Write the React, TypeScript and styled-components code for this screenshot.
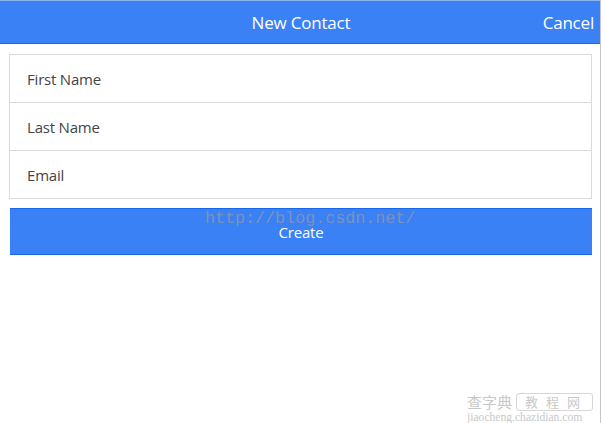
import React from "react";
import styled, { createGlobalStyle } from "styled-components";

const Global = createGlobalStyle`
  html, body { margin: 0; padding: 0; background: #fff; }
  body { font-family: "Open Sans", "Noto Sans", sans-serif; }
`;

const Frame = styled.div`
  position: relative;
  width: 601px;
  height: 423px;
  border-right: 1px solid #c4c4c4;
  box-sizing: border-box;
  overflow: hidden;
`;

const Header = styled.header`
  width: 600px;
  height: 44px;
  box-sizing: border-box;
  background: #3a81f6;
  border-top: 1px solid #8db3f2;
  border-bottom: 1px solid #1767e8;
  display: grid;
  grid-template-columns: 1fr auto 1fr;
  align-items: center;
  color: #fff;
  font-size: 17px;
`;

const Title = styled.div`
  grid-column: 2;
  letter-spacing: -0.2px;
  padding-left: 2px;
`;

const Cancel = styled.div`
  grid-column: 3;
  justify-self: end;
  padding-right: 6px;
  letter-spacing: -0.2px;
`;

const List = styled.div`
  margin: 10px 8px 0 9px;
  border: 1px solid #dadada;
  display: flex;
  flex-direction: column;
`;

const Row = styled.div<{ $first?: boolean }>`
  height: 47px;
  display: flex;
  align-items: center;
  padding-left: 17px;
  border-top: ${(p) => (p.$first ? "none" : "1px solid #dadada")};
  color: #444;
  font-size: 15px;
  letter-spacing: -0.2px;
`;

const CreateButton = styled.button`
  display: flex;
  align-items: center;
  justify-content: center;
  margin: 9px 9px 0 10px;
  width: 582px;
  height: 47px;
  box-sizing: border-box;
  background: #3a81f6;
  border: none;
  border-top: 1px solid #1767e8;
  border-bottom: 1px solid #1767e8;
  color: #fff;
  font-family: "Open Sans", "Noto Sans", sans-serif;
  font-size: 15px;
  letter-spacing: -0.2px;
  padding: 0;
`;

const UrlMark = styled.div`
  position: absolute;
  left: 205px;
  top: 209px;
  font-family: "Liberation Mono", monospace;
  font-size: 16.7px;
  line-height: 20px;
  color: rgba(150, 150, 170, 0.75);
  pointer-events: none;
`;

const SiteMark = styled.div`
  position: absolute;
  left: 467px;
  top: 393px;
  display: flex;
  flex-direction: column;
  align-items: flex-start;
  color: #c8c8c8;
  pointer-events: none;
`;

const SiteTop = styled.div`
  display: flex;
  align-items: center;
  gap: 4px;
  font-family: "Noto Sans CJK SC", sans-serif;
  font-size: 15px;
  line-height: 16px;
`;

const SiteBox = styled.span`
  border: 1px solid #d6d6d6;
  border-radius: 3px;
  padding: 0 4px 0 8px;
  letter-spacing: 8px;
  font-size: 13px;
`;

const SiteUrl = styled.div`
  font-family: "Liberation Serif", serif;
  font-size: 11.6px;
  line-height: 11px;
  margin-top: 1px;
`;

export default function App() {
  return (
    <Frame>
      <Global />
      <Header>
        <Title>New Contact</Title>
        <Cancel>Cancel</Cancel>
      </Header>
      <List>
        <Row $first>First Name</Row>
        <Row>Last Name</Row>
        <Row>Email</Row>
      </List>
      <CreateButton>Create</CreateButton>
      <UrlMark>http://blog.csdn.net/</UrlMark>
      <SiteMark>
        <SiteTop>
          查字典<SiteBox>教程网</SiteBox>
        </SiteTop>
        <SiteUrl>jiaocheng.chazidian.com</SiteUrl>
      </SiteMark>
    </Frame>
  );
}
